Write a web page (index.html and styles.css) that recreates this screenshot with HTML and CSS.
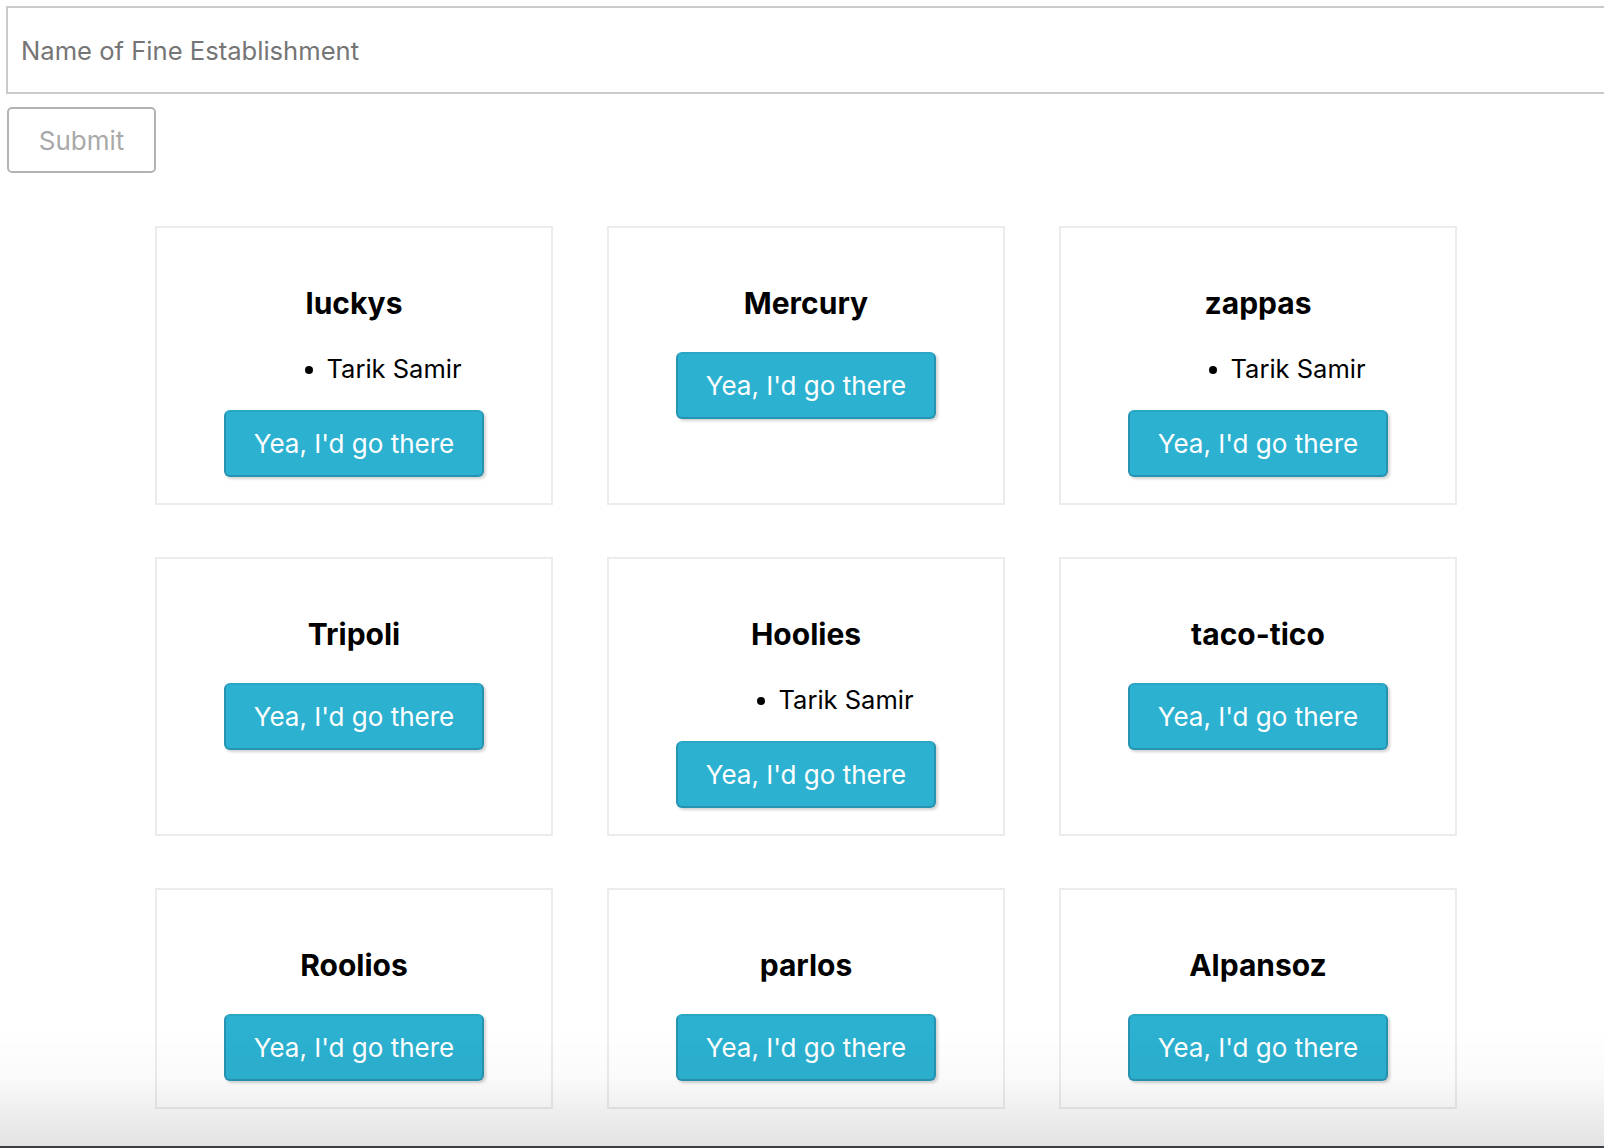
FILE: index.html
```html
<!DOCTYPE html>
<html lang="en">
<head>
<meta charset="utf-8">
<title>Fine Establishments</title>
<link rel="stylesheet" href="styles.css">
</head>
<body>
<form class="add-form">
  <input class="name-input" type="text" placeholder="Name of Fine Establishment">
  <button class="submit-btn" type="button">Submit</button>
</form>

<main class="grid">
  <section class="card">
    <h3 class="card-title">luckys</h3>
    <ul class="goers"><li><span class="goer">Tarik Samir</span></li></ul>
    <button class="go-btn" type="button">Yea, I'd go there</button>
  </section>
  <section class="card">
    <h3 class="card-title">Mercury</h3>
    <button class="go-btn" type="button">Yea, I'd go there</button>
  </section>
  <section class="card">
    <h3 class="card-title">zappas</h3>
    <ul class="goers"><li><span class="goer">Tarik Samir</span></li></ul>
    <button class="go-btn" type="button">Yea, I'd go there</button>
  </section>

  <section class="card">
    <h3 class="card-title">Tripoli</h3>
    <button class="go-btn" type="button">Yea, I'd go there</button>
  </section>
  <section class="card">
    <h3 class="card-title">Hoolies</h3>
    <ul class="goers"><li><span class="goer">Tarik Samir</span></li></ul>
    <button class="go-btn" type="button">Yea, I'd go there</button>
  </section>
  <section class="card">
    <h3 class="card-title">taco-tico</h3>
    <button class="go-btn" type="button">Yea, I'd go there</button>
  </section>

  <section class="card">
    <h3 class="card-title">Roolios</h3>
    <button class="go-btn" type="button">Yea, I'd go there</button>
  </section>
  <section class="card">
    <h3 class="card-title">parlos</h3>
    <button class="go-btn" type="button">Yea, I'd go there</button>
  </section>
  <section class="card">
    <h3 class="card-title">Alpansoz</h3>
    <button class="go-btn" type="button">Yea, I'd go there</button>
  </section>
</main>

<div class="bottom-shade"></div>
</body>
</html>
```

FILE: styles.css
```css
html, body {
  margin: 0;
  padding: 0;
  background: #ffffff;
  overflow: hidden;
}

body {
  font-family: Inter, "Noto Sans", "Liberation Sans", sans-serif;
  color: #000;
}

.add-form {
  padding: 6px 0 0 6px;
  display: flex;
  flex-direction: column;
  align-items: flex-start;
}

.name-input {
  box-sizing: border-box;
  width: 1640px;
  height: 88px;
  border: 2px solid #cacaca;
  border-radius: 0;
  padding: 0 13px;
  font-family: inherit;
  font-size: 25.6px;
  color: #333;
  outline: none;
  background: #fff;
}

.name-input::placeholder {
  color: #757575;
}

.submit-btn {
  box-sizing: border-box;
  margin-top: 13px;
  margin-left: 1px;
  width: 149px;
  height: 66px;
  border: 2px solid #b3b3b3;
  border-radius: 5px;
  background: #fff;
  color: #a9a9a9;
  font-family: inherit;
  font-size: 26px;
  padding: 0;
}

.grid {
  display: grid;
  grid-template-columns: repeat(3, 398px);
  column-gap: 54px;
  row-gap: 52px;
  justify-content: center;
  padding: 0 0 0 8px;
  margin-top: 53px;
}

.card {
  box-sizing: border-box;
  border: 2px solid #ececec;
  padding: 56px 26px 26px;
  text-align: center;
}

.card-title {
  margin: 0 0 30px;
  font-size: 30px;
  line-height: 38px;
  font-weight: 700;
}

.goers {
  list-style: none;
  margin: 0 0 25px;
  padding: 0 0 0 80px;
}

.goers li {
  font-size: 25.5px;
  line-height: 33px;
}

.goer {
  position: relative;
}

.goer::before {
  content: "";
  position: absolute;
  left: -21px;
  top: 50%;
  width: 8px;
  height: 8px;
  margin-top: -3px;
  border-radius: 50%;
  background: #000;
}

.go-btn {
  box-sizing: border-box;
  height: 67px;
  padding: 0 28px;
  border: 2px solid #2594b2;
  border-top-color: #2aa6c5;
  border-radius: 6px;
  background: #2cb1d1;
  color: #fff;
  font-family: inherit;
  font-size: 26px;
  box-shadow: 2px 2px 3px rgba(0, 0, 0, 0.18);
}

.bottom-shade {
  position: fixed;
  left: 0;
  right: 0;
  bottom: 0;
  height: 118px;
  background: linear-gradient(to bottom, rgba(0, 0, 0, 0) 0%, rgba(0, 0, 0, 0.02) 40%, rgba(0, 0, 0, 0.11) 98%, #3a3d42 98.3%, #3a3d42 100%);
  pointer-events: none;
}
```
